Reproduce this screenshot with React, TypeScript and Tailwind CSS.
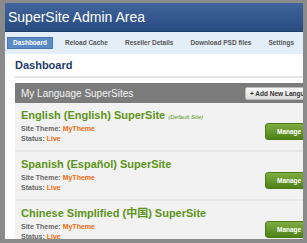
import { Fragment } from 'react';

const tabs = ['Dashboard', 'Reload Cache', 'Reseller Details', 'Download PSD files', 'Settings'];

const sites = [
  { name: 'English (English) SuperSite', isDefault: true },
  { name: 'Spanish (Español) SuperSite', isDefault: false },
  { name: 'Chinese Simplified (中国) SuperSite', isDefault: false },
];

export default function App() {
  return (
    <div
      className="w-[307px] h-[243px] bg-white border-l-[5px] border-t-[3px] border-r-[4px] border-b-[4px] border-[#8a8a8a] overflow-hidden"
      style={{ fontFamily: '"Liberation Sans", Arial, "Noto Sans CJK SC", sans-serif' }}
    >
      <div className="h-full w-full overflow-hidden">
        {/* header */}
        <div className="h-[29px] bg-gradient-to-b from-[#41659c] to-[#284b80] border-b border-[#1f3d6b] pl-[3px] pt-[6px]">
          <h1 className="text-[14px] leading-[16px] text-white">SuperSite Admin Area</h1>
        </div>

        {/* nav */}
        <div className="h-[22px] bg-[#e4eef9] flex items-start gap-[7px] pl-[2px] pt-[5px] whitespace-nowrap">
          {tabs.map((t, i) => (
            <span
              key={t}
              className={`h-[12px] px-[5px] text-[6.5px] font-bold ${
                i === 0 ? 'bg-[#5b8bc6] text-white border border-[#4b78b0] leading-[10px]' : 'text-[#555] leading-[12px]'
              }`}
            >
              {t}
            </span>
          ))}
        </div>

        {/* content */}
        <div className="pl-[10px]">
          <h2 className="mt-[5px] text-[11px] leading-[13px] font-bold text-[#1f3c70]">Dashboard</h2>
          <div className="mt-[4px] h-[2px] bg-[#e6e6e6]" />

          <div className="mt-[5px] h-[20px] bg-[#7b7b7b] flex items-center whitespace-nowrap">
            <span className="w-[230px] shrink-0 pl-[6px] text-[10px] text-[#f4f4f4]">My Language SuperSites</span>
            <span className="shrink-0 h-[13px] px-[4px] bg-gradient-to-b from-[#fafafa] to-[#dcdcdc] border border-[#bbb] rounded-[2px] text-[6.5px] leading-[11px] font-bold text-[#333]">
              + Add New Language SuperSite
            </span>
          </div>

          {sites.map((s) => (
            <Fragment key={s.name}>
              <div className="h-[49px] bg-[#f2f2f2] border-b-2 border-[#e6e6e6] flex whitespace-nowrap">
                <div className="w-[250px] shrink-0 pl-[6px] pt-[4px]">
                  <div className="flex items-baseline">
                    <span className="text-[11px] leading-[16px] font-bold text-[#5c9419]">{s.name}</span>
                    {s.isDefault && (
                      <span className="ml-[3px] text-[6px] italic text-[#5c9419]">(Default Site)</span>
                    )}
                  </div>
                  <div className="mt-[1px] text-[7px] leading-[10px] font-bold text-[#666]">
                    Site Theme: <span className="text-[#f06a10]">MyTheme</span>
                  </div>
                  <div className="text-[7px] leading-[10px] font-bold text-[#666]">
                    Status: <span className="text-[#f06a10]">Live</span>
                  </div>
                </div>
                <div className="shrink-0 pt-[20px]">
                  <span className="block h-[17px] px-[11px] rounded-[3px] bg-gradient-to-b from-[#7fae40] to-[#4e8215] border border-[#4a7a18] text-[6.5px] leading-[15px] font-bold text-white">
                    Manage SuperSite
                  </span>
                </div>
              </div>
            </Fragment>
          ))}
        </div>
      </div>
    </div>
  );
}
